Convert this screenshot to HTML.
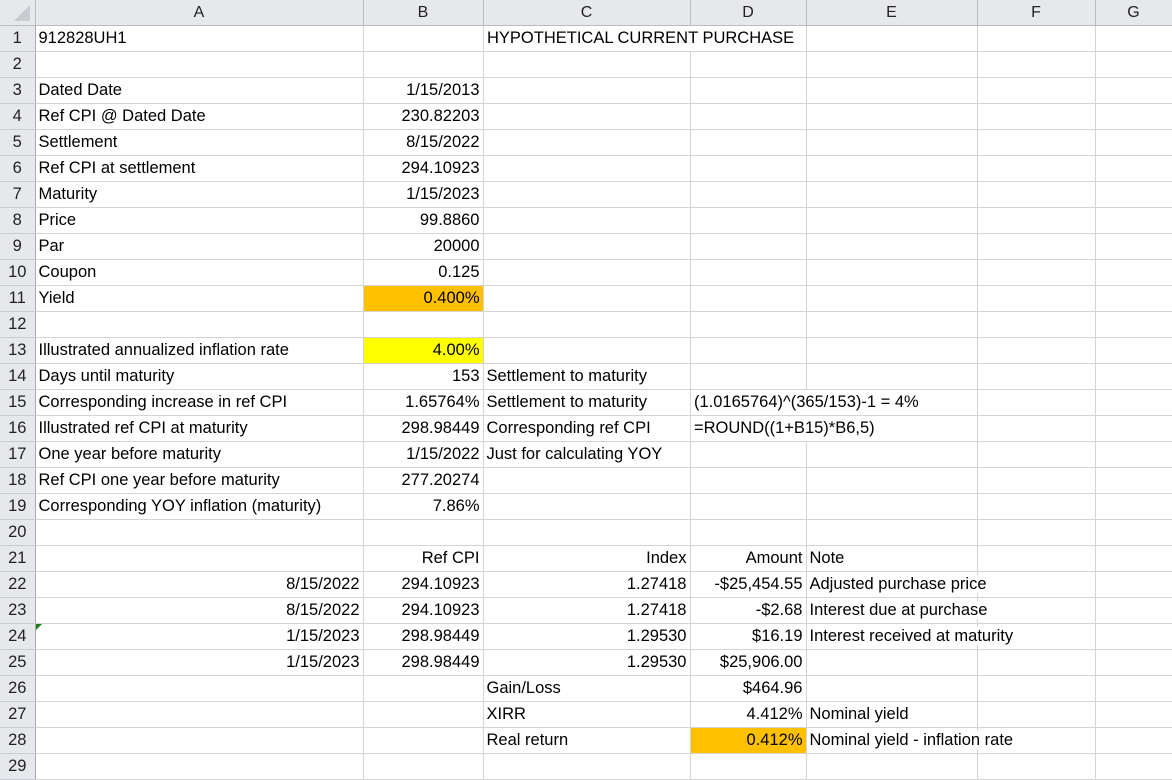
<!DOCTYPE html>
<html><head><meta charset="utf-8"><style>
body{margin:0;width:1172px;height:779px;overflow:hidden;background:#fff;font-family:"Liberation Sans",Arial,sans-serif;font-size:16.5px;color:#000;position:relative}
table{border-collapse:collapse;table-layout:fixed;position:absolute;left:0;top:0;width:1172px}
td{height:25px;padding:0 3px;border-right:1px solid #d4d4d4;border-bottom:1px solid #d4d4d4;white-space:nowrap;overflow:hidden;line-height:25px}
td.e{overflow:visible;position:relative;z-index:1}
td.e span{background:#fff;position:relative;z-index:2}
tr.h td{background:#e6e8eb;text-align:center;color:#222;border-color:#b8bcc2;height:24px;font-size:16px}
td.rh{background:#e6e8eb;text-align:center;color:#222;border-right:1px solid #a8acb2;border-bottom:1px solid #c8ccd2;padding:0}
.r{text-align:right}
.o{background:#ffc000}
.y{background:#ffff00}
.sp{position:absolute;line-height:25px;white-space:nowrap;background:#fff}
</style></head><body>
<table>
<colgroup><col style="width:35px"><col style="width:328px"><col style="width:120px"><col style="width:207px"><col style="width:116px"><col style="width:171px"><col style="width:118px"><col style="width:77px"></colgroup>
<tr class="h"><td style="position:relative"><svg width="20" height="20" style="position:absolute;right:3px;bottom:2px"><polygon points="18,2 18,18 2,18" fill="#c8cbd0"/></svg></td><td>A</td><td>B</td><td>C</td><td>D</td><td>E</td><td>F</td><td>G</td></tr>
<tr><td class="rh">1</td><td>912828UH1</td><td></td><td></td><td></td><td></td><td></td><td></td></tr>
<tr><td class="rh">2</td><td></td><td></td><td></td><td></td><td></td><td></td><td></td></tr>
<tr><td class="rh">3</td><td>Dated Date</td><td class="r">1/15/2013</td><td></td><td></td><td></td><td></td><td></td></tr>
<tr><td class="rh">4</td><td>Ref CPI @ Dated Date</td><td class="r">230.82203</td><td></td><td></td><td></td><td></td><td></td></tr>
<tr><td class="rh">5</td><td>Settlement</td><td class="r">8/15/2022</td><td></td><td></td><td></td><td></td><td></td></tr>
<tr><td class="rh">6</td><td>Ref CPI at settlement</td><td class="r">294.10923</td><td></td><td></td><td></td><td></td><td></td></tr>
<tr><td class="rh">7</td><td>Maturity</td><td class="r">1/15/2023</td><td></td><td></td><td></td><td></td><td></td></tr>
<tr><td class="rh">8</td><td>Price</td><td class="r">99.8860</td><td></td><td></td><td></td><td></td><td></td></tr>
<tr><td class="rh">9</td><td>Par</td><td class="r">20000</td><td></td><td></td><td></td><td></td><td></td></tr>
<tr><td class="rh">10</td><td>Coupon</td><td class="r">0.125</td><td></td><td></td><td></td><td></td><td></td></tr>
<tr><td class="rh">11</td><td>Yield</td><td class="r o">0.400%</td><td></td><td></td><td></td><td></td><td></td></tr>
<tr><td class="rh">12</td><td></td><td></td><td></td><td></td><td></td><td></td><td></td></tr>
<tr><td class="rh">13</td><td>Illustrated annualized inflation rate</td><td class="r y">4.00%</td><td></td><td></td><td></td><td></td><td></td></tr>
<tr><td class="rh">14</td><td>Days until maturity</td><td class="r">153</td><td>Settlement to maturity</td><td></td><td></td><td></td><td></td></tr>
<tr><td class="rh">15</td><td>Corresponding increase in ref CPI</td><td class="r">1.65764%</td><td>Settlement to maturity</td><td></td><td></td><td></td><td></td></tr>
<tr><td class="rh">16</td><td>Illustrated ref CPI at maturity</td><td class="r">298.98449</td><td>Corresponding ref CPI</td><td></td><td></td><td></td><td></td></tr>
<tr><td class="rh">17</td><td>One year before maturity</td><td class="r">1/15/2022</td><td>Just for calculating YOY</td><td></td><td></td><td></td><td></td></tr>
<tr><td class="rh">18</td><td>Ref CPI one year before maturity</td><td class="r">277.20274</td><td></td><td></td><td></td><td></td><td></td></tr>
<tr><td class="rh">19</td><td>Corresponding YOY inflation (maturity)</td><td class="r">7.86%</td><td></td><td></td><td></td><td></td><td></td></tr>
<tr><td class="rh">20</td><td></td><td></td><td></td><td></td><td></td><td></td><td></td></tr>
<tr><td class="rh">21</td><td></td><td class="r">Ref CPI</td><td class="r">Index</td><td class="r">Amount</td><td>Note</td><td></td><td></td></tr>
<tr><td class="rh">22</td><td class="r">8/15/2022</td><td class="r">294.10923</td><td class="r">1.27418</td><td class="r">-$25,454.55</td><td class="e"><span>Adjusted purchase price</span></td><td></td><td></td></tr>
<tr><td class="rh">23</td><td class="r">8/15/2022</td><td class="r">294.10923</td><td class="r">1.27418</td><td class="r">-$2.68</td><td class="e"><span>Interest due at purchase</span></td><td></td><td></td></tr>
<tr><td class="rh">24</td><td class="r" style="position:relative"><svg width="6" height="6" style="position:absolute;left:0;top:0"><polygon points="0,0 6,0 0,6" fill="#1e7b1e"/></svg>1/15/2023</td><td class="r">298.98449</td><td class="r">1.29530</td><td class="r">$16.19</td><td class="e"><span>Interest received at maturity</span></td><td></td><td></td></tr>
<tr><td class="rh">25</td><td class="r">1/15/2023</td><td class="r">298.98449</td><td class="r">1.29530</td><td class="r">$25,906.00</td><td></td><td></td><td></td></tr>
<tr><td class="rh">26</td><td></td><td></td><td>Gain/Loss</td><td class="r">$464.96</td><td></td><td></td><td></td></tr>
<tr><td class="rh">27</td><td></td><td></td><td>XIRR</td><td class="r">4.412%</td><td>Nominal yield</td><td></td><td></td></tr>
<tr><td class="rh">28</td><td></td><td></td><td>Real return</td><td class="r o">0.412%</td><td class="e"><span>Nominal yield - inflation rate</span></td><td></td><td></td></tr>
<tr><td class="rh">29</td><td></td><td></td><td></td><td></td><td></td><td></td><td></td></tr>
</table>
<div class="sp" style="left:487px;top:26px">HYPOTHETICAL CURRENT PURCHASE</div>
<div class="sp" style="left:694px;top:390px">(1.0165764)^(365/153)-1 = 4%</div>
<div class="sp" style="left:694px;top:416px">=ROUND((1+B15)*B6,5)</div>
</body></html>
